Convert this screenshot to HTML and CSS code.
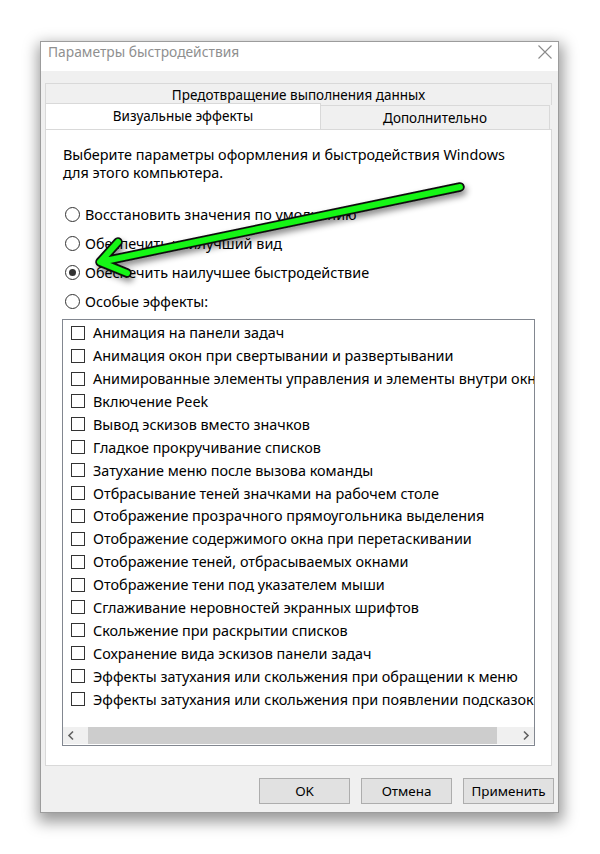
FILE: index.html
```html
<!DOCTYPE html>
<html lang="ru">
<head>
<meta charset="utf-8">
<title>Параметры быстродействия</title>
<link rel="stylesheet" href="styles.css">
</head>
<body>
<div class="stage">
  <div class="window">
    <div class="titlebar">
      <span class="title">Параметры быстродействия</span>
      <svg class="close" width="14" height="14" viewBox="0 0 14 14"><path d="M0.5 0.5 L13.5 13.5 M13.5 0.5 L0.5 13.5" stroke="#8a8a8a" stroke-width="1.1" fill="none"/></svg>
    </div>
    <div class="body">
      <div class="tab tab-top">Предотвращение выполнения данных</div>
      <div class="tabrow">
        <div class="tab tab-active">Визуальные эффекты</div>
        <div class="tab tab-other">Дополнительно</div>
      </div>
      <div class="panel">
        <p class="desc">Выберите параметры оформления и быстродействия Windows<br>для этого компьютера.</p>
        <div class="radios">
          <div class="radio"><span class="rb"></span>Восстановить значения по умолчанию</div>
          <div class="radio"><span class="rb"></span>Обеспечить наилучший вид</div>
          <div class="radio"><span class="rb checked"></span>Обеспечить наилучшее быстродействие</div>
          <div class="radio"><span class="rb"></span>Особые эффекты:</div>
        </div>
        <div class="listbox">
          <div class="items">
            <div class="item"><span class="cb"></span>Анимация на панели задач</div>
            <div class="item"><span class="cb"></span>Анимация окон при свертывании и развертывании</div>
            <div class="item"><span class="cb"></span>Анимированные элементы управления и элементы внутри окна</div>
            <div class="item"><span class="cb"></span>Включение Peek</div>
            <div class="item"><span class="cb"></span>Вывод эскизов вместо значков</div>
            <div class="item"><span class="cb"></span>Гладкое прокручивание списков</div>
            <div class="item"><span class="cb"></span>Затухание меню после вызова команды</div>
            <div class="item"><span class="cb"></span>Отбрасывание теней значками на рабочем столе</div>
            <div class="item"><span class="cb"></span>Отображение прозрачного прямоугольника выделения</div>
            <div class="item"><span class="cb"></span>Отображение содержимого окна при перетаскивании</div>
            <div class="item"><span class="cb"></span>Отображение теней, отбрасываемых окнами</div>
            <div class="item"><span class="cb"></span>Отображение тени под указателем мыши</div>
            <div class="item"><span class="cb"></span>Сглаживание неровностей экранных шрифтов</div>
            <div class="item"><span class="cb"></span>Скольжение при раскрытии списков</div>
            <div class="item"><span class="cb"></span>Сохранение вида эскизов панели задач</div>
            <div class="item"><span class="cb"></span>Эффекты затухания или скольжения при обращении к меню</div>
            <div class="item"><span class="cb"></span>Эффекты затухания или скольжения при появлении подсказок</div>
          </div>
          <div class="hscroll">
            <svg class="arr" width="17" height="17" viewBox="0 0 17 17"><path d="M10 4.5 L6 8.5 L10 12.5" stroke="#606060" stroke-width="1.6" fill="none"/></svg>
            <div class="track"><div class="thumb"></div></div>
            <svg class="arr" width="17" height="17" viewBox="0 0 17 17"><path d="M7 4.5 L11 8.5 L7 12.5" stroke="#606060" stroke-width="1.6" fill="none"/></svg>
          </div>
        </div>
      </div>
      <div class="buttons">
        <div class="btn">OK</div>
        <div class="btn">Отмена</div>
        <div class="btn">Применить</div>
      </div>
    </div>
  </div>
  <svg class="annot" width="600" height="854" viewBox="0 0 600 854">
    <defs>
      <filter id="sh" x="-20%" y="-60%" width="140%" height="220%">
        <feDropShadow dx="2" dy="4" stdDeviation="3" flood-color="#000" flood-opacity="0.45"/>
      </filter>
    </defs>
    <g filter="url(#sh)" fill="none" stroke-linecap="round" stroke-linejoin="round">
      <path d="M460 187 L100 262 M118 242 L100 262 L127 273" stroke="#111" stroke-width="9.5"/>
      <path d="M460 187 L100 262 M118 242 L100 262 L127 273" stroke="#12f512" stroke-width="6"/>
    </g>
  </svg>
</div>
</body>
</html>
```

FILE: styles.css
```css
html, body {
  margin: 0;
  padding: 0;
  background: #ffffff;
}
body {
  font-family: "Noto Sans", "Open Sans", "Liberation Sans", sans-serif;
  font-size: 14.4px;
  color: #000;
}
.stage {
  position: relative;
  width: 600px;
  height: 854px;
  padding: 41px 0 0 40px;
  box-sizing: border-box;
}
.window {
  width: 519px;
  height: 772px;
  box-sizing: border-box;
  border: 1px solid #9c9c9c;
  background: #f0f0f0;
  display: flex;
  flex-direction: column;
  box-shadow: 1px 6px 14px 3px rgba(0, 0, 0, 0.4);
}
.titlebar {
  height: 29px;
  flex: none;
  background: #ffffff;
  display: flex;
  justify-content: space-between;
  align-items: flex-start;
  padding: 0 6px 0 7px;
  box-sizing: border-box;
}
.title {
  font-size: 13.8px;
  line-height: 19px;
  color: #8f8f8f;
}
.close {
  margin-top: 3px;
}
.body {
  flex: 1;
  padding: 12px 6px 0 4px;
  display: flex;
  flex-direction: column;
}
.tab {
  box-sizing: border-box;
  display: flex;
  align-items: center;
  justify-content: center;
  border: 1px solid #d9d9d9;
  border-bottom: none;
  white-space: nowrap;
  font-size: 13.5px;
}
.tab-top {
  height: 22px;
  background: #f0f0f0;
  padding-top: 1px;
}
.tabrow {
  display: flex;
  align-items: flex-end;
  height: 26px;
  margin-top: -2px;
}
.tab-active {
  width: 276px;
  height: 26px;
  background: #ffffff;
  padding-bottom: 2px;
}
.tab-other {
  flex: 1;
  height: 24px;
  margin-right: 2px;
  background: #f0f0f0;
  border-left: none;
  padding-top: 1px;
}
.panel {
  height: 637px;
  box-sizing: border-box;
  background: #ffffff;
  border: 1px solid #d9d9d9;
  padding: 16px 16px 0 17px;
  display: flex;
  flex-direction: column;
}
.desc {
  margin: 0;
  line-height: 18px;
}
.radios {
  margin-top: 18.6px;
  display: flex;
  flex-direction: column;
}
.radio {
  height: 28.7px;
  display: flex;
  align-items: center;
  white-space: nowrap;
}
.rb {
  width: 15px;
  height: 15px;
  box-sizing: border-box;
  border: 1px solid #333;
  border-radius: 50%;
  margin: 0 5px 0 2px;
  background: #fff;
  display: flex;
  align-items: center;
  justify-content: center;
  flex: none;
}
.rb.checked::after {
  content: "";
  width: 7px;
  height: 7px;
  border-radius: 50%;
  background: #333;
}
.listbox {
  margin-top: 4px;
  margin-left: -1px;
  height: 427px;
  box-sizing: border-box;
  border: 1px solid #828790;
  display: flex;
  flex-direction: column;
  overflow: hidden;
}
.items {
  flex: 1;
  padding-top: 1px;
  overflow: hidden;
}
.item {
  height: 22.9px;
  display: flex;
  align-items: center;
  white-space: nowrap;
  padding-left: 8px;
}
.cb {
  width: 14px;
  height: 14px;
  box-sizing: border-box;
  border: 1px solid #333;
  background: #fff;
  margin-right: 8px;
  flex: none;
}
.hscroll {
  height: 17px;
  margin-bottom: 1px;
  display: flex;
  align-items: center;
  background: #f0f0f0;
}
.arr {
  flex: none;
  width: 17px;
  height: 17px;
}
.track {
  flex: 1;
  height: 17px;
  display: flex;
  align-items: stretch;
  padding: 0 20px 0 8px;
}
.thumb {
  flex: 1;
  background: #cdcdcd;
}
.buttons {
  display: flex;
  justify-content: flex-end;
  gap: 11px;
  margin-top: 12px;
  margin-right: -2px;
}
.btn {
  width: 91px;
  height: 26px;
  box-sizing: border-box;
  border: 1px solid #adadad;
  background: #e1e1e1;
  display: flex;
  align-items: center;
  justify-content: center;
  font-size: 13.4px;
}
.annot {
  position: absolute;
  left: 0;
  top: 0;
  pointer-events: none;
}
```
